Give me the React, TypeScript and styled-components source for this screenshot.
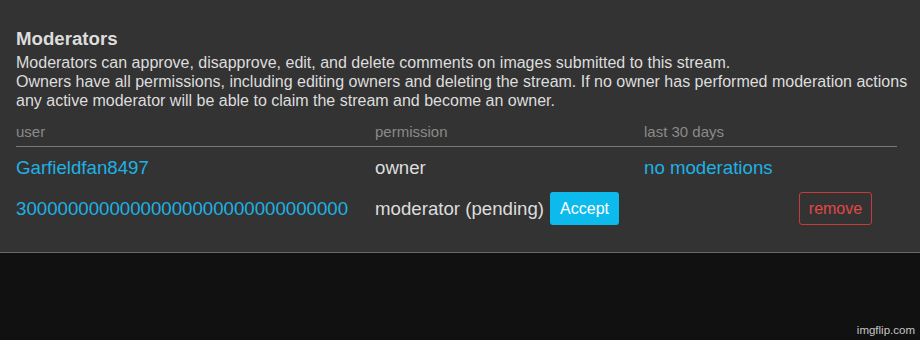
import React from "react";
import styled, { createGlobalStyle } from "styled-components";

const Global = createGlobalStyle`
  html, body { margin: 0; padding: 0; background: #111; overflow: hidden; }
  body { font-family: "Liberation Sans", Arial, sans-serif; width: 920px; height: 340px; position: relative; }
`;

const Panel = styled.section`
  background: #333;
  border-bottom: 1px solid #6a6a6a;
  padding: 28px 0 23px 16px;
  color: #ddd;
`;

const Title = styled.h3`
  margin: 0 0 4px;
  font-size: 18.67px;
  font-weight: bold;
  color: #ddd;
  line-height: 21px;
`;

const Desc = styled.p`
  margin: 0 0 13px;
  font-size: 16px;
  line-height: 19px;
  white-space: nowrap;
  color: #ddd;
`;

const Table = styled.div`
  width: 881px;
  display: grid;
  grid-template-columns: 359px 269px 155px 1fr;
`;

const Head = styled.div`
  font-size: 15px;
  color: #8a8a8a;
  line-height: 17px;
  padding-bottom: 6px;
  border-bottom: 1px solid #7a7a7a;
`;

const Cell = styled.div<{ $pad?: number }>`
  display: flex;
  align-items: center;
  gap: 6px;
  font-size: 18.67px;
  line-height: 21px;
  min-height: 33px;
  padding: ${(p) => p.$pad ?? 4}px 0;
  color: #ddd;
  white-space: nowrap;
`;

const UserLink = styled.a`
  color: #1fb1e3;
  text-decoration: none;
`;

const AcceptButton = styled.button`
  background: #0cbaec;
  color: #fff;
  border: none;
  border-radius: 3px;
  height: 33px;
  width: 69px;
  font-family: "Liberation Sans", Arial, sans-serif;
  font-size: 16px;
  padding: 0;
`;

const RemoveButton = styled.button`
  background: transparent;
  color: #e14848;
  border: 1px solid #c23c3c;
  border-radius: 3px;
  height: 33px;
  width: 73px;
  font-family: "Liberation Sans", Arial, sans-serif;
  font-size: 16px;
  padding: 0;
`;

const Watermark = styled.div`
  position: absolute;
  right: 5px;
  bottom: 4px;
  font-size: 11.5px;
  color: #c4c4c4;
  font-family: "Liberation Sans", Arial, sans-serif;
`;

export default function App() {
  return (
    <>
      <Global />
      <Panel>
        <Title>Moderators</Title>
        <Desc>
          Moderators can approve, disapprove, edit, and delete comments on images submitted to this stream.
          <br />
          Owners have all permissions, including editing owners and deleting the stream. If no owner has performed moderation actions
          <br />
          any active moderator will be able to claim the stream and become an owner.
        </Desc>
        <Table>
          <Head>user</Head>
          <Head>permission</Head>
          <Head>last 30 days</Head>
          <Head />
          <Cell>
            <UserLink href="#">Garfieldfan8497</UserLink>
          </Cell>
          <Cell>owner</Cell>
          <Cell>
            <UserLink href="#">no moderations</UserLink>
          </Cell>
          <Cell />
          <Cell>
            <UserLink href="#">30000000000000000000000000000000</UserLink>
          </Cell>
          <Cell>
            moderator (pending)
            <AcceptButton>Accept</AcceptButton>
          </Cell>
          <Cell />
          <Cell>
            <RemoveButton>remove</RemoveButton>
          </Cell>
        </Table>
      </Panel>
      <Watermark>imgflip.com</Watermark>
    </>
  );
}
